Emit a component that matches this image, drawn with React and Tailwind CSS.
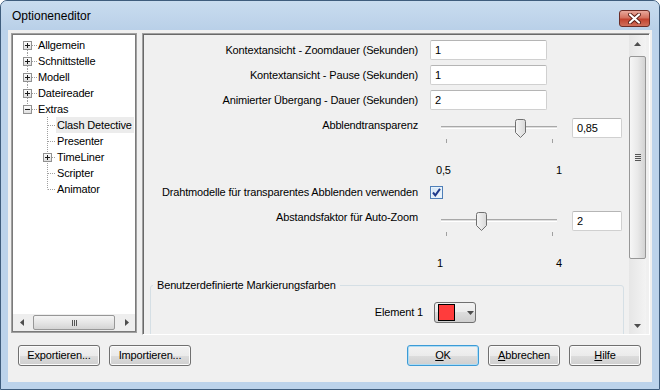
import React from 'react';

const font = "font-['Liberation_Sans',Arial,sans-serif]";

const PlusBox = ({ x, minus }) => (
  <>
    <rect x={x + 0.5} y="4.5" width="8" height="8" fill="url(#boxg)" stroke="#919191" />
    <line x1={x + 2} y1="8.5" x2={x + 7} y2="8.5" stroke="#1b1b1b" />
    {!minus && <line x1={x + 4.5} y1="6" x2={x + 4.5} y2="11" stroke="#1b1b1b" />}
  </>
);

const RootRow = ({ label, first, last, minus }) => (
  <div className="flex items-center h-[16px] whitespace-nowrap">
    <svg width="25" height="16" className="shrink-0">
      <defs>
        <linearGradient id="boxg" x1="0" y1="0" x2="0" y2="1">
          <stop offset="0" stopColor="#ffffff" />
          <stop offset="1" stopColor="#dcdcdc" />
        </linearGradient>
      </defs>
      {!first && <line x1="14.5" y1="0" x2="14.5" y2="4" stroke="#a0a0a0" strokeDasharray="1 1" />}
      {!last && <line x1="14.5" y1="13" x2="14.5" y2="16" stroke="#a0a0a0" strokeDasharray="1 1" />}
      <line x1="19" y1="8.5" x2="25" y2="8.5" stroke="#a0a0a0" strokeDasharray="1 1" />
      <PlusBox x={10} minus={minus} />
    </svg>
    <span>{label}</span>
  </div>
);

const ChildRow = ({ label, last, plus, selected }) => (
  <div className="flex items-center h-[16px] whitespace-nowrap">
    <svg width="43" height="16" className="shrink-0">
      <line x1="34.5" y1="0" x2="34.5" y2={last ? 8.5 : 16} stroke="#a0a0a0" strokeDasharray="1 1" />
      <line x1="35" y1="8.5" x2="43" y2="8.5" stroke="#a0a0a0" strokeDasharray="1 1" />
      {plus && <PlusBox x={30} />}
    </svg>
    <span className={`px-[1px] leading-[16px] ${selected ? 'bg-[#ececec] pr-[2px]' : ''}`}>{label}</span>
  </div>
);

const Arrow = ({ dir }) => {
  const paths = {
    up: 'M0,4 L3.5,0 L7,4 Z',
    down: 'M0,0 L7,0 L3.5,4 Z',
    left: 'M4,0 L4,7 L0,3.5 Z',
    right: 'M0,0 L4,3.5 L0,7 Z',
  };
  const vert = dir === 'up' || dir === 'down';
  return (
    <svg width={vert ? 7 : 4} height={vert ? 4 : 7}>
      <path d={paths[dir]} fill="#4d4d4d" />
    </svg>
  );
};

const Field = ({ value, w = 'w-[117px]' }) => (
  <div className={`${w} h-[20px] shrink-0 bg-white border border-[#d0d0d0] border-t-[#b5b5b5] rounded-[2px] pl-[4px] flex items-center`}>
    {value}
  </div>
);

const Thumb = () => (
  <svg width="11" height="19">
    <defs>
      <linearGradient id="thumbg" x1="0" y1="0" x2="1" y2="0">
        <stop offset="0" stopColor="#f6f6f6" />
        <stop offset="1" stopColor="#d8d8d8" />
      </linearGradient>
    </defs>
    <path d="M0.5,2.5 Q0.5,0.5 2.5,0.5 H8.5 Q10.5,0.5 10.5,2.5 V13.5 L5.5,18.5 L0.5,13.5 Z" fill="url(#thumbg)" stroke="#707070" />
  </svg>
);

const Slider = ({ thumbLeft }) => (
  <div className="relative w-[126px] h-[28px] shrink-0 ml-[6px]">
    <div className="absolute left-[5px] right-[5px] top-[8px] h-[3px] border-t border-[#a8a8a8] border-b border-b-white bg-[#dedede]" />
    <div className="absolute left-[10px] top-[21px] w-[1px] h-[4px] bg-[#a0a0a0]" />
    <div className="absolute left-[116px] top-[21px] w-[1px] h-[4px] bg-[#a0a0a0]" />
    <div className="absolute top-[1px]" style={{ left: thumbLeft }}>
      <Thumb />
    </div>
  </div>
);

const Button = ({ children, w = 'w-[82px]', primary }) => (
  <button
    className={`${w} h-[21px] rounded-[3px] border ${primary ? 'border-[#3c9bd6] shadow-[inset_0_0_0_1px_#aedcf4]' : 'border-[#707070] shadow-[inset_0_0_0_1px_#fbfbfb]'} bg-[linear-gradient(#f2f2f2_0%,#ebebeb_50%,#dddddd_50%,#cfcfcf_100%)] text-[11px] leading-none flex items-center justify-center`}
  >
    {children}
  </button>
);

export default function App() {
  return (
    <div className={`w-[660px] h-[390px] bg-[#bcd3eb] border border-[#3f5d7d] rounded-t-[7px] flex flex-col overflow-hidden text-[11px] tracking-[-0.15px] text-black ${font}`}>
      {/* title bar */}
      <div className="h-[29px] shrink-0 flex items-start justify-between pl-[11px] pr-[9px] bg-[linear-gradient(#c9dcef,#b9d0e8)]">
        <span className="mt-[8px] text-[12px] leading-[15px] tracking-normal text-black">Optioneneditor</span>
        <div className="mt-[9px] w-[31px] h-[17px] rounded-[3px] border border-[#6b2d27] bg-[linear-gradient(#e9a99c_0%,#d4725f_45%,#c2432f_55%,#d0705c_100%)] flex items-center justify-center">
          <svg width="13" height="11">
            <path d="M2,1.5 L11,9.5 M11,1.5 L2,9.5" stroke="#5b2119" strokeWidth="4" strokeLinecap="round" />
            <path d="M2,1.5 L11,9.5 M11,1.5 L2,9.5" stroke="#ffffff" strokeWidth="2.2" strokeLinecap="round" />
          </svg>
        </div>
      </div>

      {/* client area */}
      <div className="mx-[7px] mb-[7px] flex-1 bg-[#f0f0f0] flex flex-col">
        <div className="h-[302px] pt-[3px] pl-[3px] pr-[2px] flex gap-[5px]">
          {/* tree */}
          <div className="w-[126px] h-[300px] border border-[#a0a0a0] shadow-[inset_0_0_0_1px_#7a7a7a] bg-white p-[1px] flex flex-col">
            <div className="flex-1 pt-[2px] overflow-hidden">
              <RootRow label="Allgemein" first />
              <RootRow label="Schnittstelle" />
              <RootRow label="Modell" />
              <RootRow label="Dateireader" />
              <RootRow label="Extras" last minus />
              <ChildRow label="Clash Detective" selected />
              <ChildRow label="Presenter" />
              <ChildRow label="TimeLiner" plus />
              <ChildRow label="Scripter" />
              <ChildRow label="Animator" last />
            </div>
            <div className="h-[17px] flex items-center bg-[#eeeeee]">
              <div className="w-[17px] flex justify-center"><Arrow dir="left" /></div>
              <div className="ml-[3px] w-[82px] h-[15px] rounded-[2px] border border-[#979797] bg-[linear-gradient(#f4f4f4,#e6e6e6_50%,#d4d4d4)] flex items-center justify-center gap-[1px]">
                <div className="w-[1px] h-[6px] bg-[#555]" />
                <div className="w-[1px] h-[6px] bg-[#555]" />
                <div className="w-[1px] h-[6px] bg-[#555]" />
              </div>
              <div className="flex-1" />
              <div className="w-[17px] flex justify-center"><Arrow dir="right" /></div>
            </div>
          </div>

          {/* options panel */}
          <div className="w-[508px] h-[302px] border border-[#a0a0a0] border-r-white border-b-white shadow-[inset_1px_1px_0_#696969] pl-[1px] pt-[1px] flex">
            <div className="w-[485px] overflow-hidden flex flex-col">
              <div className="flex items-center mt-[5px] h-[20px]">
                <div className="w-[274px] text-right">Kontextansicht - Zoomdauer (Sekunden)</div>
                <div className="ml-[12px]"><Field value="1" /></div>
              </div>
              <div className="flex items-center mt-[5px] h-[20px]">
                <div className="w-[274px] text-right">Kontextansicht - Pause (Sekunden)</div>
                <div className="ml-[12px]"><Field value="1" /></div>
              </div>
              <div className="flex items-center mt-[5px] h-[20px]">
                <div className="w-[274px] text-right">Animierter Übergang - Dauer (Sekunden)</div>
                <div className="ml-[12px]"><Field value="2" /></div>
              </div>

              <div className="flex items-start mt-[8px] h-[28px]">
                <div className="w-[274px] text-right leading-[13px] mt-[1px]">Abblendtransparenz</div>
                <div className="ml-[12px]"><Slider thumbLeft={79} /></div>
                <div className="ml-[10px]"><Field value="0,85" w="w-[50px]" /></div>
              </div>
              <div className="mt-[18px] h-[13px] leading-[13px] pl-[292px]">
                <div className="w-[126px] flex justify-between"><span>0,5</span><span>1</span></div>
              </div>

              <div className="flex items-center mt-[9px] h-[13px]">
                <div className="w-[274px] text-right whitespace-nowrap">Drahtmodelle für transparentes Abblenden verwenden</div>
                <svg width="13" height="13" className="ml-[12px] shrink-0">
                  <defs>
                    <linearGradient id="cbg" x1="0" y1="0" x2="1" y2="1">
                      <stop offset="0" stopColor="#cfe3f5" />
                      <stop offset="1" stopColor="#f4f9fd" />
                    </linearGradient>
                  </defs>
                  <rect x="0.5" y="0.5" width="12" height="12" fill="url(#cbg)" stroke="#4f7fb8" />
                  <rect x="1.5" y="1.5" width="10" height="10" fill="none" stroke="#e8f2fb" />
                  <path d="M3,6.5 L5.3,9.3 L10,2.8" fill="none" stroke="#1f3a8c" strokeWidth="2" />
                </svg>
              </div>

              <div className="flex items-start mt-[12px] h-[28px]">
                <div className="w-[274px] text-right leading-[13px]">Abstandsfaktor für Auto-Zoom</div>
                <div className="ml-[12px]"><Slider thumbLeft={40} /></div>
                <div className="ml-[10px]"><Field value="2" w="w-[50px]" /></div>
              </div>
              <div className="mt-[18px] h-[13px] leading-[13px] pl-[293px]">
                <div className="w-[125px] flex justify-between"><span>1</span><span>4</span></div>
              </div>

              <fieldset className="mt-[9px] ml-[6px] w-[474px] border border-[#d5dfe5] rounded-[3px] pb-[20px]">
                <legend className="ml-[2px] px-[4px] leading-[13px]">Benutzerdefinierte Markierungsfarben</legend>
                <div className="flex items-center mt-[10px]">
                  <div className="w-[272px] text-right">Element 1</div>
                  <div className="ml-[11px] w-[42px] h-[21px] rounded-[3px] border border-[#707070] bg-[linear-gradient(#f2f2f2_0%,#ebebeb_50%,#dddddd_50%,#cfcfcf_100%)] flex items-center pl-[3px]">
                    <div className="w-[17px] h-[17px] border border-black bg-[#ff3c3c]" />
                    <div className="ml-[12px]"><Arrow dir="down" /></div>
                  </div>
                </div>
              </fieldset>
            </div>

            {/* vertical scrollbar */}
            <div className="w-[17px] flex flex-col bg-[linear-gradient(90deg,#e6e6e6,#f3f3f3)]">
              <div className="h-[17px] flex items-center justify-center"><Arrow dir="up" /></div>
              <div className="mt-[4px] h-[203px] rounded-[2px] border border-[#979797] bg-[linear-gradient(90deg,#f6f6f6,#e9e9e9_50%,#d3d3d3)] flex flex-col items-center justify-center gap-[1px]">
                <div className="w-[6px] h-[1px] bg-[#555]" />
                <div className="w-[6px] h-[1px] bg-[#555]" />
                <div className="w-[6px] h-[1px] bg-[#555]" />
                <div className="w-[6px] h-[1px] bg-[#555]" />
              </div>
              <div className="flex-1" />
              <div className="h-[17px] flex items-center justify-center"><Arrow dir="down" /></div>
            </div>
          </div>
        </div>

        {/* bottom buttons */}
        <div className="mt-[13px] pl-[10px] pr-[11px] flex gap-[9px]">
          <Button>Exportieren...</Button>
          <Button>Importieren...</Button>
          <div className="flex-1" />
          <Button w="w-[72px]" primary><span className="underline">O</span>K</Button>
          <Button w="w-[72px]"><span className="underline">A</span>bbrechen</Button>
          <Button w="w-[72px]"><span className="underline">H</span>ilfe</Button>
        </div>
      </div>
    </div>
  );
}
